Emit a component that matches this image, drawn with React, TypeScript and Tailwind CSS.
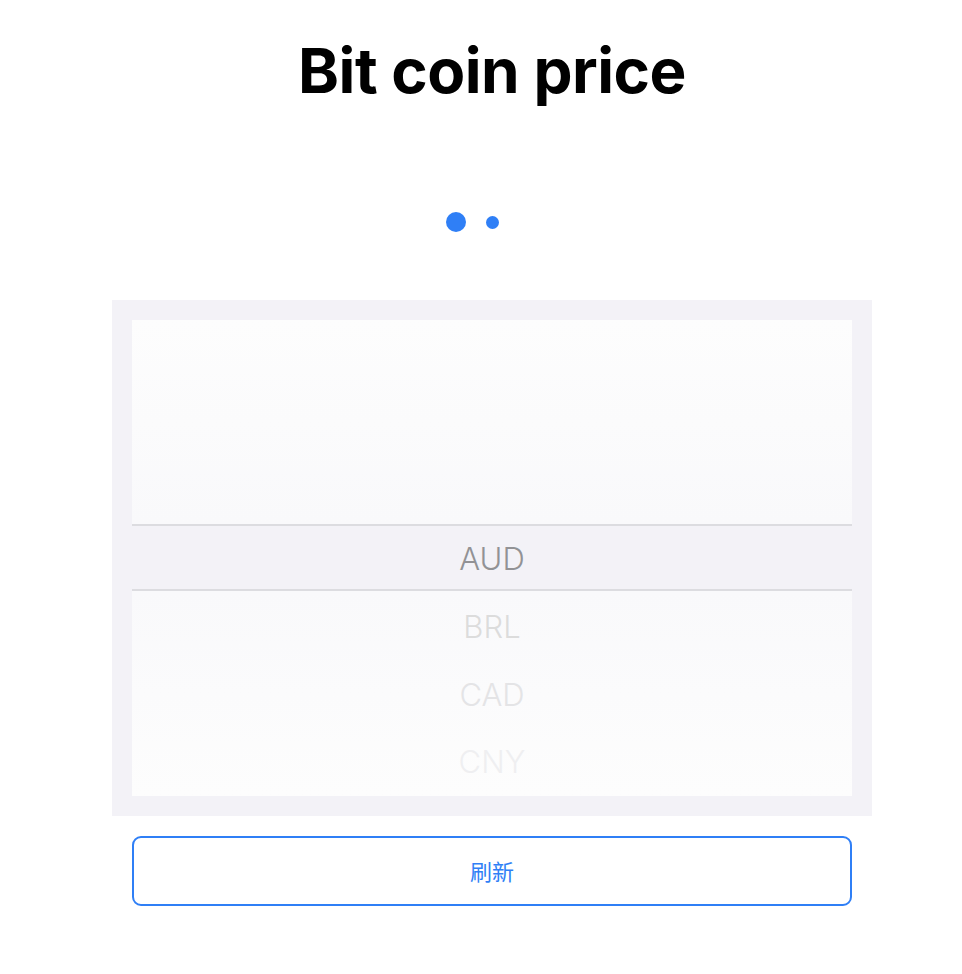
const below = [
  { code: "BRL", color: "text-[#dcdcdc]" },
  { code: "CAD", color: "text-[#e4e4e6]" },
  { code: "CNY", color: "text-[#efeff1]" },
];

export default function App() {
  return (
    <div className="w-[962px] h-[974px] pl-[22px] bg-white flex flex-col items-center font-['Inter','Noto_Sans_CJK_SC',sans-serif]">
      <h1 className="mt-[33px] h-[76px] text-[62px] leading-[76px] font-bold tracking-[-0.5px] text-black">
        Bit coin price
      </h1>

      {/* page dots */}
      <div className="mt-[103px] h-[20px] flex items-center gap-[20px] -ml-[39px]">
        <div className="w-[20px] h-[20px] rounded-full bg-[#2f7ff6]" />
        <div className="w-[13px] h-[13px] rounded-full bg-[#2f7ff6]" />
      </div>

      {/* picker */}
      <div className="mt-[68px] w-[760px] p-[20px] bg-[#f3f2f7]">
        <div className="flex flex-col">
          <div className="h-[204px] bg-gradient-to-b from-[#fdfdfd] to-[#f9f9fb]" />
          <div className="h-[67px] pt-[4px] border-y-2 border-[#dcdce0] bg-[#f3f2f7] flex items-center justify-center">
            <span className="text-[31px] font-light text-[#929295]">AUD</span>
          </div>
          <div className="h-[205px] bg-gradient-to-b from-[#f9f9fb] to-[#fdfdfd] flex flex-col items-center pt-[3px]">
            {below.map((c) => (
              <div key={c.code} className={`h-[68px] flex items-center text-[31px] font-light ${c.color}`}>
                {c.code}
              </div>
            ))}
          </div>
        </div>
      </div>

      <button className="mt-[20px] w-[720px] h-[70px] pt-[2px] rounded-[9px] border-2 border-[#2f7ff6] bg-white text-[22px] text-[#2f7ff6]">
        刷新
      </button>
    </div>
  );
}
